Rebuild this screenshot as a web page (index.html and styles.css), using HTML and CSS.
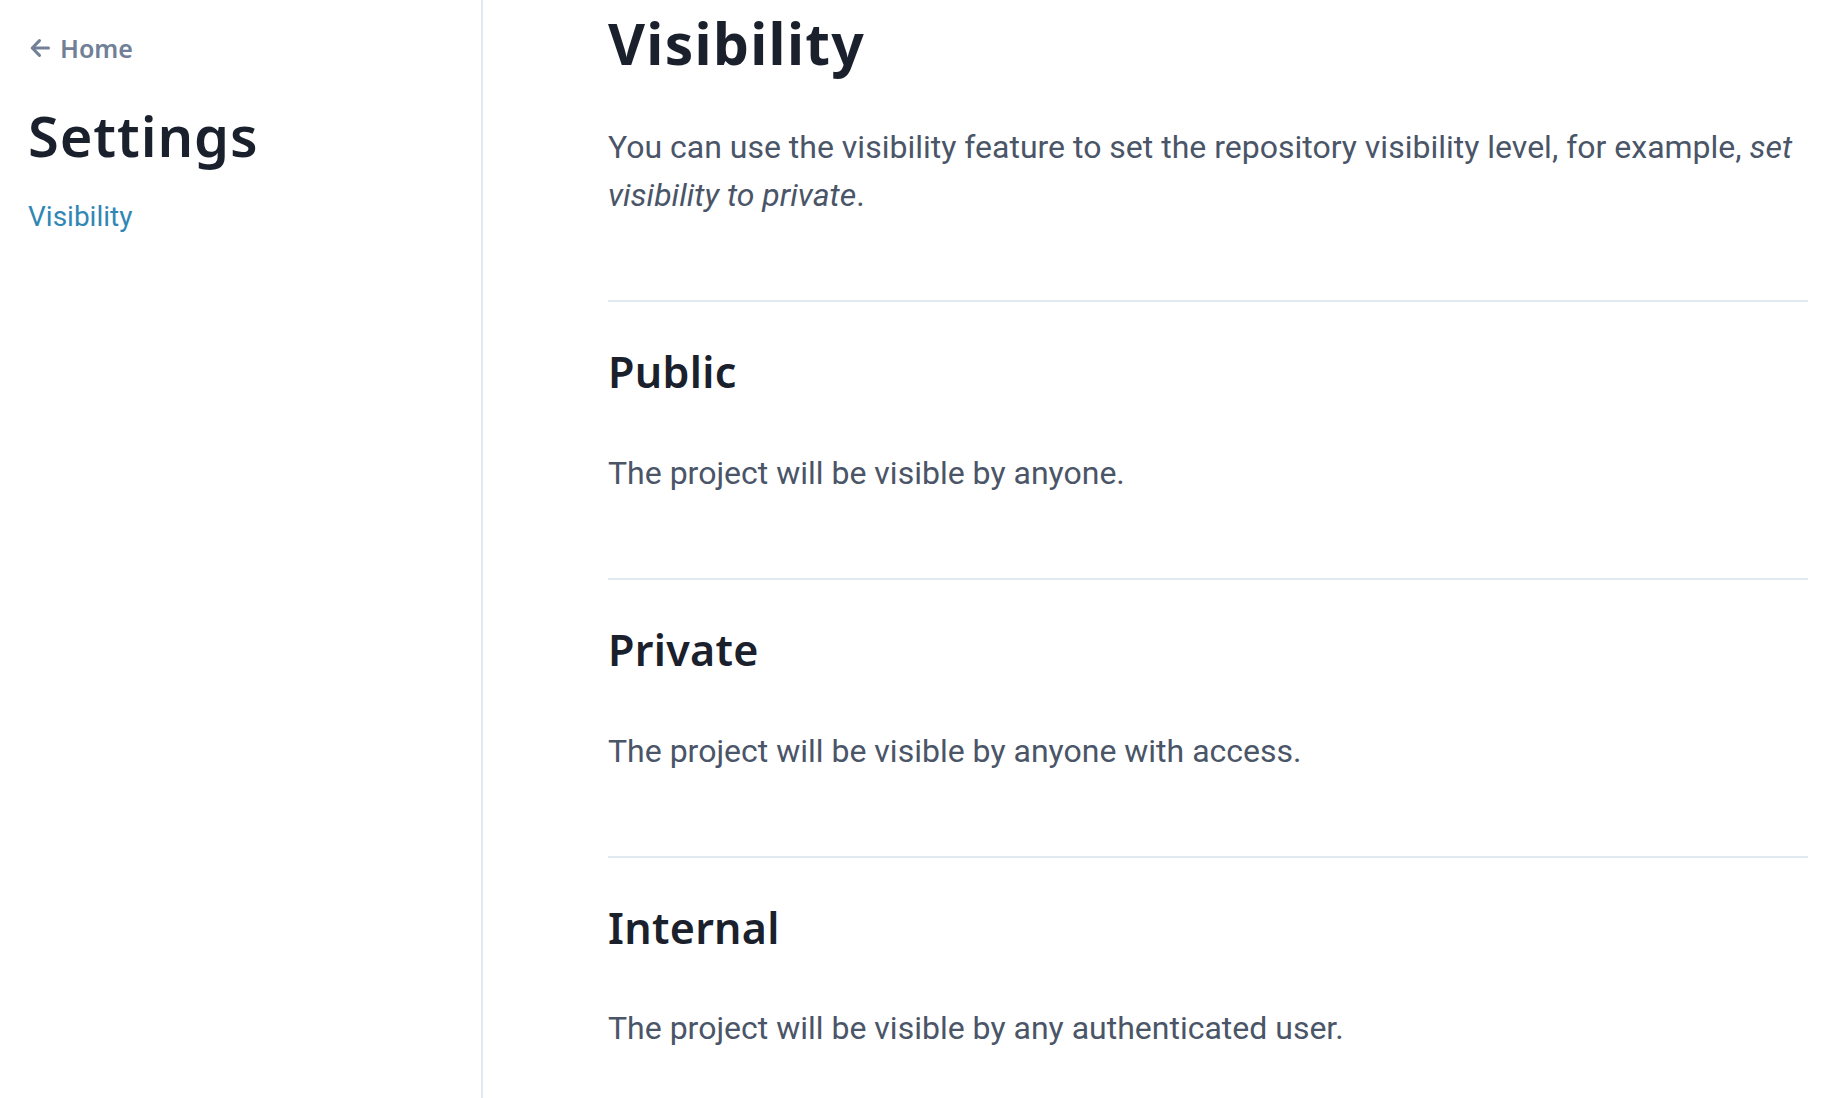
FILE: index.html
```html
<!DOCTYPE html>
<html lang="en">
<head>
<meta charset="utf-8">
<title>Settings – Visibility</title>
<link rel="stylesheet" href="styles.css">
</head>
<body>
<div class="layout">
  <aside class="sidebar">
    <a class="back-link" href="#">
      <svg class="back-icon" viewBox="0 0 20 20" width="20" height="20" aria-hidden="true">
        <path d="M18.5 10H2.2 M9.5 2.6L2.2 10l7.3 7.4" fill="none" stroke="currentColor" stroke-width="3" stroke-linecap="round" stroke-linejoin="round"/>
      </svg>
      <span>Home</span>
    </a>
    <h2 class="sidebar-title">Settings</h2>
    <nav class="sidebar-nav">
      <a class="nav-link" href="#">Visibility</a>
    </nav>
  </aside>
  <main class="main">
    <div class="content">
      <h1 class="page-title">Visibility</h1>
      <p class="intro">You can use the visibility feature to set the repository visibility level, for example, <em>set</em> <em>visibility to private</em>.</p>
      <section class="option">
        <h3 class="option-title">Public</h3>
        <p class="option-text">The project will be visible by anyone.</p>
      </section>
      <section class="option">
        <h3 class="option-title">Private</h3>
        <p class="option-text">The project will be visible by anyone with access.</p>
      </section>
      <section class="option">
        <h3 class="option-title">Internal</h3>
        <p class="option-text">The project will be visible by any authenticated user.</p>
      </section>
    </div>
  </main>
</div>
</body>
</html>
```

FILE: styles.css
```css
* {
  box-sizing: border-box;
}

html, body {
  margin: 0;
  padding: 0;
  background: #ffffff;
}

body {
  font-family: Roboto, "Liberation Sans", sans-serif;
  color: #4a5568;
}

.layout {
  display: flex;
  min-height: 100vh;
}

.sidebar {
  flex: 0 0 483px;
  border-right: 2px solid #e2e8f0;
  padding: 30px 0 0 28px;
  display: flex;
  flex-direction: column;
  align-items: flex-start;
}

.back-link {
  display: flex;
  align-items: center;
  gap: 10px;
  height: 36px;
  font-family: "Noto Sans", sans-serif;
  font-weight: 600;
  font-size: 25px;
  line-height: 36px;
  color: #718096;
  text-decoration: none;
}

.back-icon {
  display: block;
  margin-left: 2px;
}

.sidebar-title {
  margin: 36px 0 0 0;
  font-family: "Noto Sans", sans-serif;
  font-weight: 600;
  font-size: 56px;
  line-height: 1.2;
  letter-spacing: 0.9px;
  color: #1a202c;
}

.sidebar-nav {
  margin-top: 27px;
}

.nav-link {
  display: block;
  font-family: Roboto, sans-serif;
  font-size: 28px;
  line-height: 42px;
  color: #3187b4;
  text-decoration: none;
}

.main {
  flex: 1 1 auto;
  padding: 9px 0 0 125px;
}

.content {
  width: 1200px;
}

.page-title {
  margin: 0;
  font-family: "Noto Sans", sans-serif;
  font-weight: 700;
  font-size: 57px;
  line-height: 1.2;
  letter-spacing: 1.3px;
  color: #1a202c;
}

.intro {
  margin: 46px 0 81px 0;
  font-size: 32px;
  line-height: 48px;
}

.option {
  border-top: 2px solid #e2e8f0;
  padding: 44px 0 81px 0;
}

.option-title {
  margin: 0;
  font-family: "Noto Sans", sans-serif;
  font-weight: 600;
  font-size: 43px;
  line-height: 1.2;
  letter-spacing: 0.3px;
  color: #1a202c;
}

.option-text {
  margin: 51px 0 0 0;
  font-size: 32px;
  line-height: 48px;
}
```
